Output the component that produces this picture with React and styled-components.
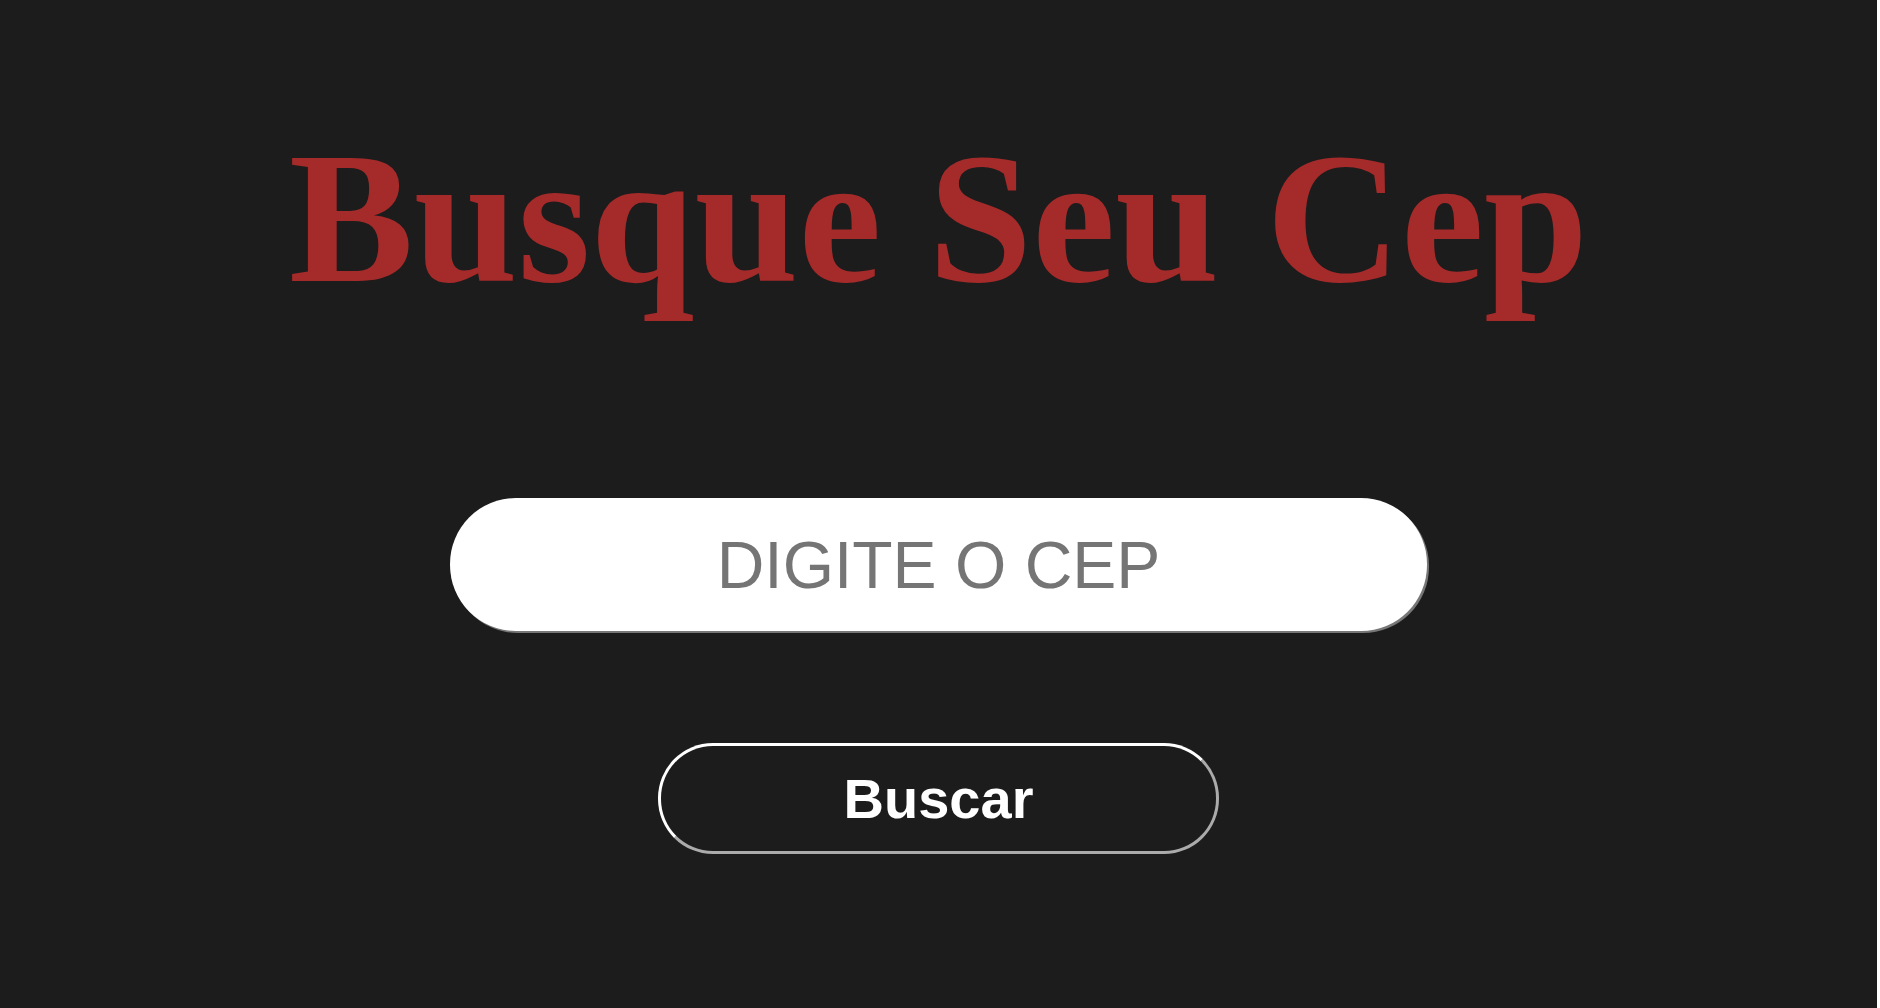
import styled, { createGlobalStyle } from "styled-components";

const GlobalStyle = createGlobalStyle`
  html, body {
    margin: 0;
    padding: 0;
    background: #ffffff;
  }
`;

const App = () => {
  return (
    <>
      <GlobalStyle />
      <Container>
        <Title>Busque Seu Cep</Title>
        <CepInput type="text" placeholder="DIGITE O CEP" />
        <SearchButton>Buscar</SearchButton>
      </Container>
    </>
  );
};

export default App;

const Container = styled.main`
  width: calc(100% - 3px);
  height: 100vh;
  background-color: #1c1c1c;
  display: flex;
  flex-direction: column;
  align-items: center;
  box-sizing: border-box;
  padding-top: 110px;
`;

const Title = styled.h1`
  margin: 0;
  font-family: "Liberation Serif", "Times New Roman", serif;
  font-weight: 700;
  font-size: 187px;
  line-height: normal;
  color: #a52a2a;
`;

const CepInput = styled.input`
  margin-top: 173px;
  width: 977px;
  height: 133px;
  box-sizing: border-box;
  border: none;
  border-radius: 66px;
  background: #ffffff;
  box-shadow: 2px 2px 0 #777777;
  outline: none;
  text-align: center;
  font-family: "Liberation Sans", Arial, sans-serif;
  font-size: 66px;
  color: #333333;

  &::placeholder {
    color: #757575;
  }
`;

const SearchButton = styled.button`
  margin-top: 112px;
  width: 561px;
  height: 111px;
  box-sizing: border-box;
  border: 3px outset #ffffff;
  border-radius: 55px;
  background: transparent;
  cursor: pointer;
  font-family: "Liberation Sans", Arial, sans-serif;
  font-weight: 700;
  font-size: 56px;
  color: #ffffff;
`;
